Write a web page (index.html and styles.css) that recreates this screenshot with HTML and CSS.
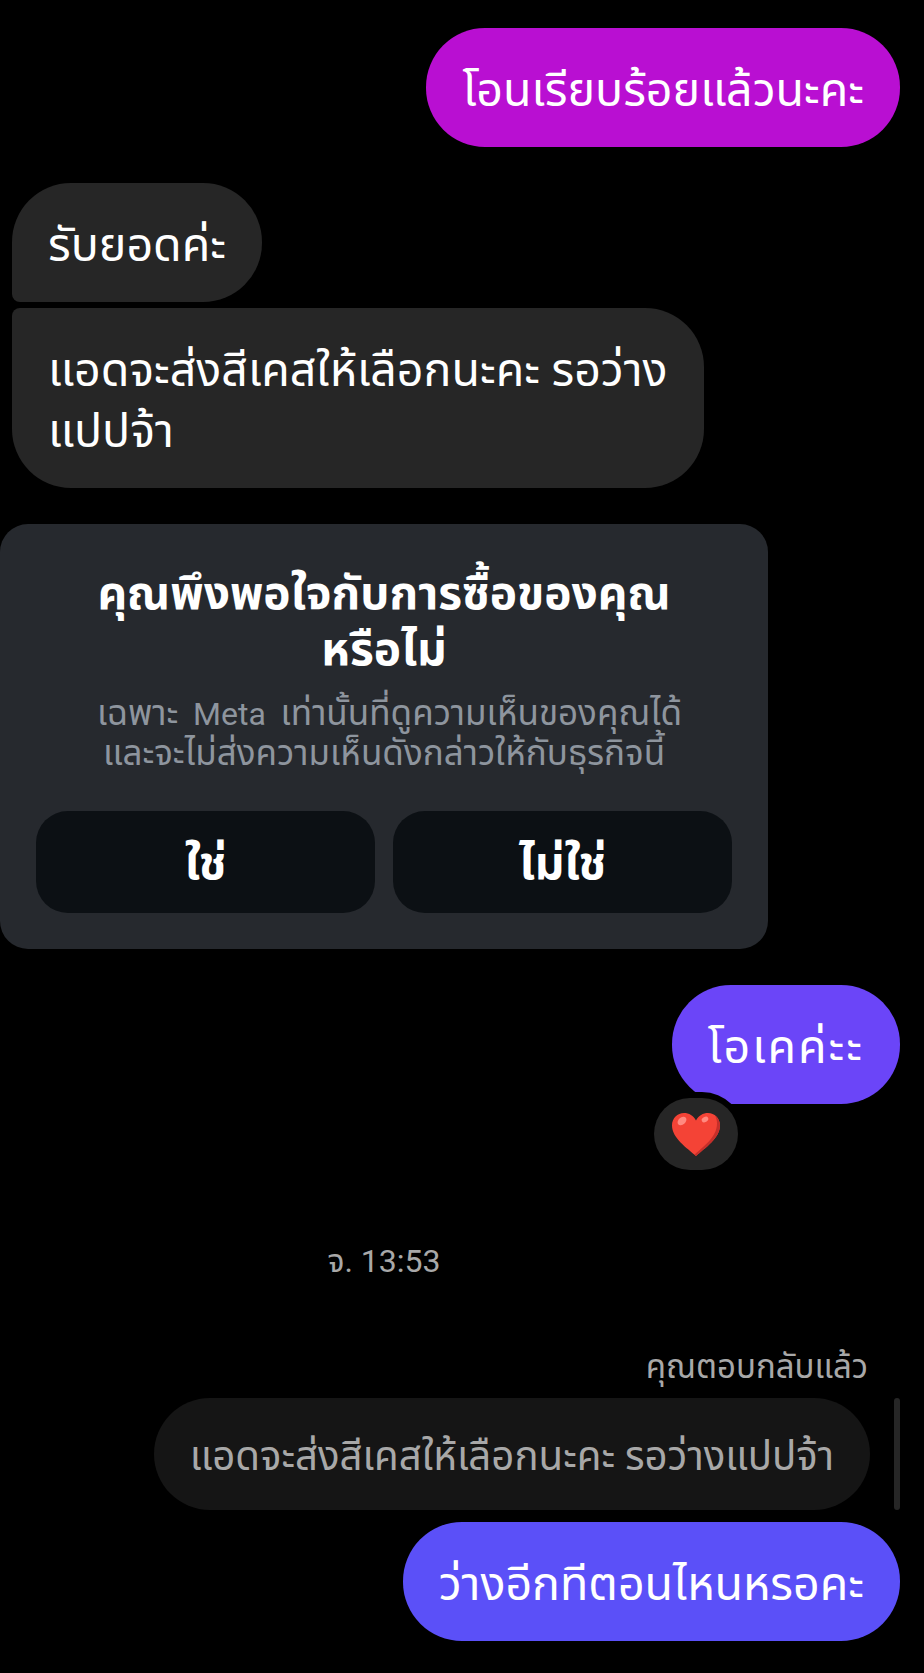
FILE: index.html
```html
<!DOCTYPE html>
<html lang="th">
<head>
  <meta charset="UTF-8">
  <title>Chat</title>
  <link rel="stylesheet" href="styles.css">
</head>
<body>
  <div class="chat">
    <div class="row mine first">
      <div class="bubble magenta">โอนเรียบร้อยแล้วนะคะ</div>
    </div>

    <div class="row theirs group">
      <div class="bubble gray top">รับยอดค่ะ</div>
    </div>
    <div class="row theirs near">
      <div class="bubble gray bottom">แอดจะส่งสีเคสให้เลือกนะคะ รอว่าง<br>แปปจ้า</div>
    </div>

    <div class="card">
      <h2 class="card-title">คุณพึงพอใจกับการซื้อของคุณ<br>หรือไม่</h2>
      <p class="card-text"><span class="text-first">เฉพาะ <span class="latin">Meta</span> เท่านั้นที่ดูความเห็นของคุณได้</span><br>และจะไม่ส่งความเห็นดังกล่าวให้กับธุรกิจนี้</p>
      <div class="card-buttons">
        <div class="card-button">ใช่</div>
        <div class="card-button">ไม่ใช่</div>
      </div>
    </div>

    <div class="row mine group">
      <div class="bubble violet has-reaction">โอเคค่ะะ
        <div class="reaction">
          <svg class="heart" viewBox="0 0 48 43" width="48" height="43">
            <path fill="#f44336" d="M24 43C15 35 0 25 0 12.500C0 5 5.500 0 12 0c5 0 9.500 2.500 12 7.500C26.500 2.500 31 0 36 0c6.500 0 12 5 12 12.500C48 25 33 35 24 43z"/>
            <path fill="#c62f2a" d="M43 2.500c3 2.500 5 6 5 10C48 25 33 35 24 43l-1.500-1.300C32 33 45 24 45 10.500c0-3-.7-5.700-2-8z"/>
            <ellipse fill="#ff8a80" cx="10" cy="8" rx="5" ry="3.500" transform="rotate(-40 10 8)"/>
            <ellipse fill="#ff8a80" cx="33" cy="6.500" rx="3.500" ry="2.500" transform="rotate(-30 33 6.500)"/>
          </svg>
        </div>
      </div>
    </div>

    <div class="time">จ. 13:53</div>

    <div class="reply-label">คุณตอบกลับแล้ว</div>
    <div class="row mine reply-row">
      <div class="bubble quoted">แอดจะส่งสีเคสให้เลือกนะคะ รอว่างแปปจ้า</div>
      <div class="reply-bar"></div>
    </div>
    <div class="row mine reply-next">
      <div class="bubble indigo">ว่างอีกทีตอนไหนหรอคะ</div>
    </div>
  </div>
</body>
</html>
```

FILE: styles.css
```css
html, body {
  margin: 0;
  background: #000;
}
body {
  font-family: Roboto, "Noto Sans", "Noto Sans Thai", sans-serif;
  color: #fff;
  width: 924px;
  height: 1673px;
  overflow: hidden;
}
.chat {
  display: flex;
  flex-direction: column;
  padding-top: 28px;
}
.row {
  display: flex;
  padding: 0 24px 0 12px;
}
.mine {
  justify-content: flex-end;
}
.group {
  margin-top: 36px;
}
.near {
  margin-top: 6px;
}
.bubble {
  font-size: 46.500px;
  line-height: 61px;
  padding: 32px 36px 26px;
  border-radius: 59px;
  white-space: nowrap;
}
.magenta {
  background: #b90fd2;
}
.violet {
  background: #6b45f8;
  letter-spacing: 2px;
}
.indigo {
  background: #5b50f8;
}
.gray {
  background: #262626;
}
.top {
  border-bottom-left-radius: 8px;
}
.bottom {
  border-top-left-radius: 8px;
}
.has-reaction {
  position: relative;
}
.reaction {
  position: absolute;
  left: -18px;
  top: 113px;
  width: 84px;
  height: 72px;
  background: #262626;
  border-radius: 36px;
  box-shadow: 0 0 0 6px #000;
  display: flex;
  align-items: center;
  justify-content: center;
}
.card {
  width: 768px;
  box-sizing: border-box;
  margin-top: 36px;
  padding: 41px 36px 36px;
  height: 425px;
  background: #26292e;
  border-radius: 28px;
  text-align: center;
}
.card-title {
  margin: 0;
  font-size: 46px;
  line-height: 56px;
  font-weight: 700;
}
.card-text {
  margin: 17px 0 0;
  font-size: 35px;
  line-height: 40px;
  color: #8e959e;
}
.text-first {
  padding-left: 11px;
}
.latin {
  font-size: 32px;
  margin: 0 6px;
}
.card-buttons {
  display: flex;
  gap: 18px;
  margin-top: 37px;
}
.card-button {
  flex: 1;
  height: 102px;
  line-height: 105px;
  background: #0c1014;
  border-radius: 32px;
  font-size: 46px;
  font-weight: 700;
}
.time {
  width: 768px;
  margin-top: 139px;
  text-align: center;
  font-size: 32px;
  line-height: 36px;
  color: #a8a8a8;
}
.reply-label {
  margin-top: 68px;
  padding-right: 56px;
  text-align: right;
  font-size: 33px;
  line-height: 40px;
  color: #a8a8a8;
}
.reply-row {
  margin-top: 11px;
  align-items: stretch;
  gap: 24px;
}
.quoted {
  background: #151515;
  color: #a8a8a8;
  font-size: 40.200px;
  line-height: 56px;
  padding: 31px 36px 25px;
}
.reply-bar {
  width: 6px;
  background: #262626;
  border-radius: 3px;
}
.reply-next {
  margin-top: 12px;
}
```
